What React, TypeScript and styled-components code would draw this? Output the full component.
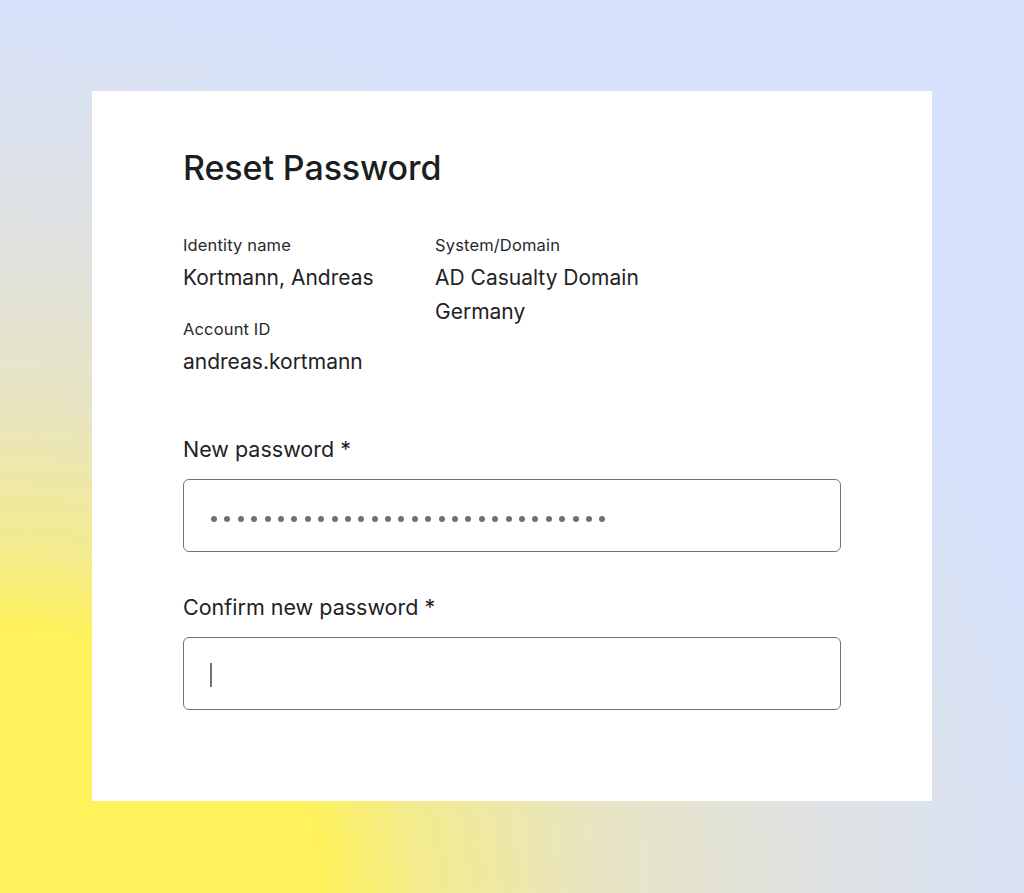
import React from 'react';
import styled, { createGlobalStyle } from 'styled-components';

const GlobalStyle = createGlobalStyle`
  html, body {
    margin: 0;
    padding: 0;
  }
  body {
    font-family: Inter, "Noto Sans", "Liberation Sans", sans-serif;
    color: #1d2024;
    -webkit-font-smoothing: antialiased;
  }
`;

const Page = styled.div`
  width: 1024px;
  height: 893px;
  box-sizing: border-box;
  padding: 91px 92px 92px 92px;
  background: radial-gradient(
    ellipse 1100px 900px at 0% 100%,
    #fff25a 0%,
    #fff25a 29%,
    #f3eb8c 38%,
    #e8e5c4 55%,
    #e0e2e2 74%,
    #d6e2fc 100%
  );
`;

const Card = styled.section`
  width: 840px;
  height: 710px;
  box-sizing: border-box;
  background: #ffffff;
  padding: 57px 91px 91px 91px;
  display: flex;
  flex-direction: column;
`;

const Title = styled.h1`
  margin: 0;
  font-size: 34px;
  line-height: 40px;
  font-weight: 500;
  letter-spacing: -0.1px;
  color: #1b1e21;
`;

const InfoGrid = styled.div`
  margin-top: 47px;
  display: grid;
  grid-template-columns: 252px 1fr;
`;

const InfoColumn = styled.div`
  display: flex;
  flex-direction: column;
`;

const InfoLabel = styled.div<{ $spaced?: boolean }>`
  font-size: 16.5px;
  line-height: 20px;
  letter-spacing: 0.15px;
  color: #26292d;
  margin-top: ${(p) => (p.$spaced ? '24px' : '0')};
`;

const InfoValue = styled.div`
  margin-top: 6px;
  font-size: 21px;
  line-height: 34px;
  color: #1f2226;

  & + & {
    margin-top: 0;
  }
`;

const FieldLabel = styled.label<{ $first?: boolean }>`
  display: block;
  font-size: 21.5px;
  line-height: 30px;
  color: #1f2226;
  margin-top: ${(p) => (p.$first ? '55px' : '40px')};
`;

const Field = styled.div`
  margin-top: 15px;
  height: 73px;
  box-sizing: border-box;
  border: 1.5px solid #707378;
  border-radius: 6px;
  padding: 0 27px;
  display: flex;
  align-items: center;
`;

const Mask = styled.div`
  display: flex;
  gap: 7.4px;
  margin-top: 7px;
`;

const Dot = styled.span`
  width: 6px;
  height: 6px;
  border-radius: 50%;
  background: #6c7278;
`;

const Caret = styled.span`
  width: 2px;
  height: 24px;
  margin-left: -1px;
  margin-top: 3px;
  background: #6e7379;
`;

const App: React.FC = () => {
  const dots = Array.from({ length: 30 }, (_, i) => i);

  return (
    <>
      <GlobalStyle />
      <Page>
        <Card>
          <Title>Reset Password</Title>

          <InfoGrid>
            <InfoColumn>
              <InfoLabel>Identity name</InfoLabel>
              <InfoValue>Kortmann, Andreas</InfoValue>
              <InfoLabel $spaced>Account ID</InfoLabel>
              <InfoValue>andreas.kortmann</InfoValue>
            </InfoColumn>
            <InfoColumn>
              <InfoLabel>System/Domain</InfoLabel>
              <InfoValue>AD Casualty Domain</InfoValue>
              <InfoValue>Germany</InfoValue>
            </InfoColumn>
          </InfoGrid>

          <FieldLabel $first>New password *</FieldLabel>
          <Field>
            <Mask aria-label="password">
              {dots.map((i) => (
                <Dot key={i} />
              ))}
            </Mask>
          </Field>

          <FieldLabel>Confirm new password *</FieldLabel>
          <Field>
            <Caret />
          </Field>
        </Card>
      </Page>
    </>
  );
};

export default App;
